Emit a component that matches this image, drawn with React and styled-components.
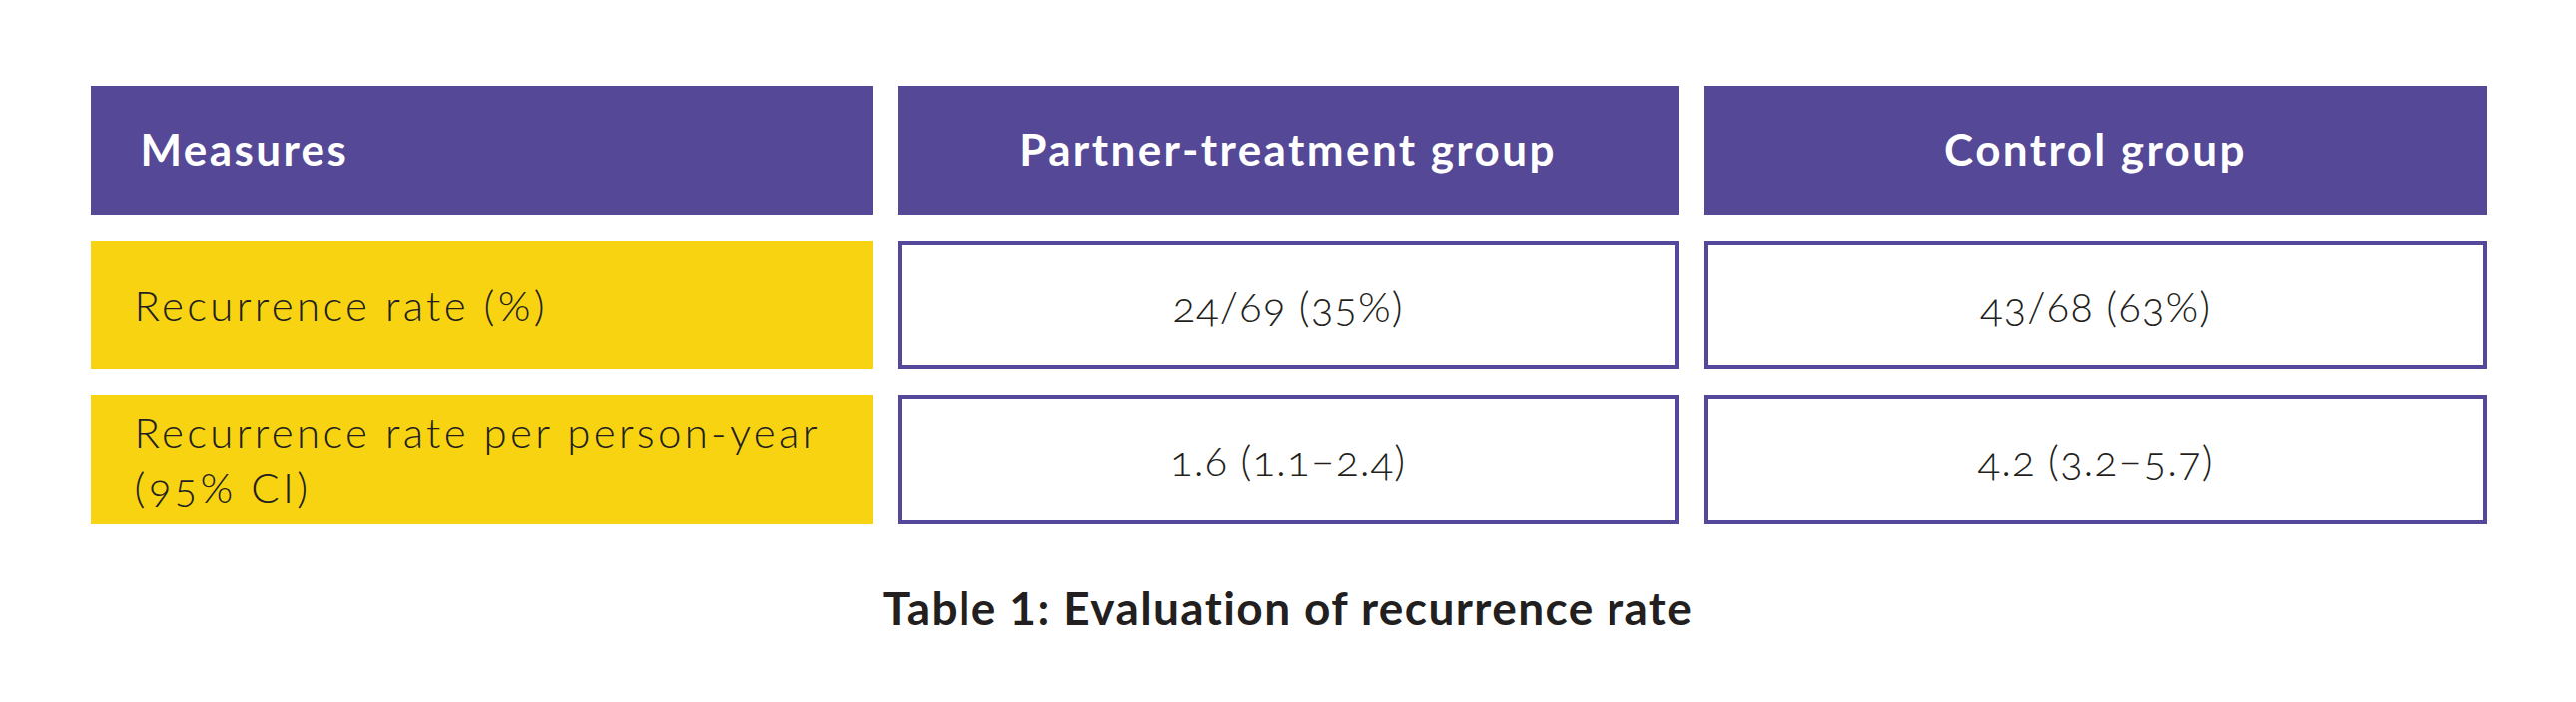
import React from 'react';
import styled, { createGlobalStyle } from 'styled-components';

const GlobalStyle = createGlobalStyle`
  html, body {
    margin: 0;
    padding: 0;
    background: #ffffff;
  }
  body {
    font-family: Lato, "Open Sans", sans-serif;
    color: #231f20;
  }
`;

const Page = styled.div`
  width: 2580px;
  height: 703px;
  padding-top: 86px;
  box-sizing: border-box;
  display: flex;
  flex-direction: column;
  align-items: center;
`;

const Table = styled.div`
  display: grid;
  grid-template-columns: 783px 783px 784px;
  grid-auto-rows: 129px;
  column-gap: 25px;
  row-gap: 26px;
  margin-left: 1px;
`;

const HeadCell = styled.div`
  background: #554896;
  color: #ffffff;
  font-size: 44px;
  font-weight: 700;
  letter-spacing: 2.4px;
  display: flex;
  align-items: center;
  justify-content: ${(p) => (p.$left ? 'flex-start' : 'center')};
  padding-left: ${(p) => (p.$left ? '50px' : '0')};
  padding-bottom: 4px;
`;

const LabelCell = styled.div`
  background: #f8d311;
  font-size: 42px;
  font-weight: 300;
  letter-spacing: 3.3px;
  line-height: 55px;
  display: flex;
  align-items: center;
  padding-left: 44px;
  font-variant-numeric: oldstyle-nums;
`;

const ValueCell = styled.div`
  border: 4px solid #54489a;
  box-sizing: border-box;
  font-size: 42px;
  font-weight: 300;
  letter-spacing: 1px;
  display: flex;
  align-items: center;
  justify-content: center;
  font-variant-numeric: oldstyle-nums;
`;

const Caption = styled.div`
  margin-top: 56px;
  font-size: 46px;
  font-weight: 700;
  letter-spacing: 1.4px;
  line-height: 55px;
`;

const rows = [
  { label: 'Recurrence rate (%)', treat: '24/69 (35%)', control: '43/68 (63%)' },
  {
    label: (
      <>
        Recurrence rate per person-year
        <br />
        (95% CI)
      </>
    ),
    treat: '1.6 (1.1–2.4)',
    control: '4.2 (3.2–5.7)',
  },
];

export default function App() {
  return (
    <>
      <GlobalStyle />
      <Page>
        <Table>
          <HeadCell $left>Measures</HeadCell>
          <HeadCell>Partner-treatment group</HeadCell>
          <HeadCell>Control group</HeadCell>
          {rows.map((r, i) => (
            <React.Fragment key={i}>
              <LabelCell>{r.label}</LabelCell>
              <ValueCell>{r.treat}</ValueCell>
              <ValueCell>{r.control}</ValueCell>
            </React.Fragment>
          ))}
        </Table>
        <Caption>Table 1: Evaluation of recurrence rate</Caption>
      </Page>
    </>
  );
}
